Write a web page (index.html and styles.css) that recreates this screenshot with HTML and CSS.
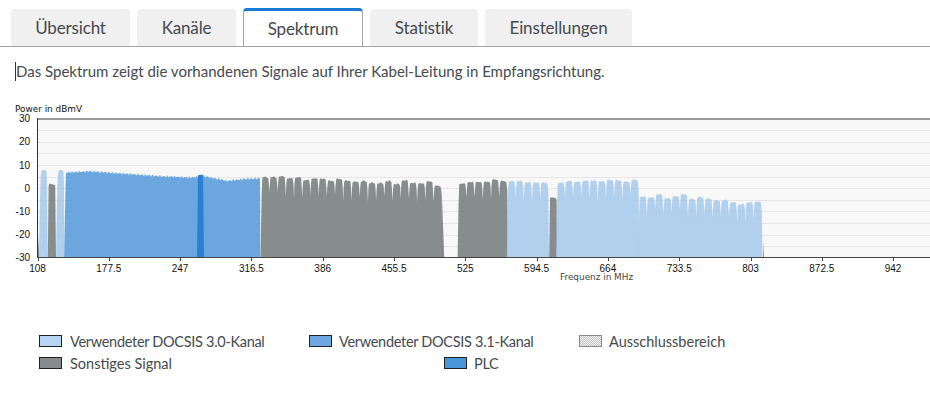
FILE: index.html
```html
<!DOCTYPE html>
<html lang="de">
<head>
    <meta charset="UTF-8">
    <meta name="viewport" content="width=device-width, initial-scale=1.0">
    <title>Spektrum</title>
    <link rel="stylesheet" href="styles.css">
</head>
<body>
    <div class="tabs">
        <a class="tab">Übersicht</a>
        <a class="tab">Kanäle</a>
        <a class="tab active">Spektrum</a>
        <a class="tab">Statistik</a>
        <a class="tab">Einstellungen</a>
    </div>

    <p class="intro">Das Spektrum zeigt die vorhandenen Signale auf Ihrer Kabel-Leitung in Empfangsrichtung.</p>

    <svg id="chart" class="chart" width="930" height="185" viewBox="0 0 930 185"></svg>

    <div class="legend">
        <div class="legend-row">
            <div class="legend-item col-a"><span class="swatch docsis30"></span>Verwendeter DOCSIS 3.0-Kanal</div>
            <div class="legend-item col-b"><span class="swatch docsis31"></span>Verwendeter DOCSIS 3.1-Kanal</div>
            <div class="legend-item wide"><span class="swatch excluded"></span>Ausschlussbereich</div>
        </div>
        <div class="legend-row">
            <div class="legend-item col-c wide"><span class="swatch other"></span>Sonstiges Signal</div>
            <div class="legend-item"><span class="swatch plc"></span>PLC</div>
        </div>
    </div>

    <script src="chart.js"></script>
</body>
</html>
```

FILE: styles.css
```css
body {
    font-family: 'Lato', sans-serif;
    margin: 0;
    background-color: #ffffff;
    color: #444a4f;
    overflow: hidden;
}

.tabs {
    display: flex;
    gap: 7px;
    height: 37px;
    margin-top: 9px;
    padding-left: 11px;
    border-bottom: 1px solid #a3a3a3;
}

.tab {
    display: flex;
    align-items: center;
    justify-content: center;
    background-color: #f0f0f0;
    border-radius: 4px 4px 0 0;
    font-size: 17px;
    letter-spacing: -0.15px;
}

.tab:nth-child(1) { width: 119px; }
.tab:nth-child(2) { width: 99px; }
.tab:nth-child(3) { width: 120px; }
.tab:nth-child(4) { width: 108px; }
.tab:nth-child(5) { width: 147px; }

.tab.active {
    background-color: #ffffff;
    border: 1px solid #a3a3a3;
    border-top: 3px solid #1a7bd4;
    border-bottom: none;
    height: 38px;
    box-sizing: border-box;
    margin-top: -1px;
}

.intro {
    margin: 15px 0 0 15px;
    height: 19px;
    line-height: 19px;
    font-size: 15px;
    border-left: 1px solid #333;
}

.chart {
    display: block;
    margin-top: 19px;
}

.chart text {
    font-family: 'Liberation Sans', sans-serif;
    font-size: 10px;
    fill: #111;
}

.chart .axis-title {
    font-family: 'DejaVu Sans', sans-serif;
    font-size: 8.9px;
}

.chart .axis-title.freq {
    fill: #444;
}

.legend {
    margin-top: 45px;
    padding-left: 39px;
    font-size: 14.5px;
    letter-spacing: -0.3px;
}

.legend-row {
    display: flex;
    height: 22px;
    align-items: center;
}

.legend-item {
    display: flex;
    align-items: center;
    gap: 7px;
}

.legend-item.wide {
    letter-spacing: 0;
}

.col-a { width: 270px; gap: 8px; }
.col-b { width: 270px; }
.col-c { width: 405px; gap: 8px; }

.swatch {
    width: 23px;
    height: 12px;
    box-sizing: border-box;
    border: 1px solid #222;
}

.docsis30 { background-color: #b7d4f0; }
.docsis31 { background-color: #6fa8e0; }
.other { background-color: #888b8d; }
.plc { background-color: #4a94da; }

.excluded {
    border-color: #8a8a8a;
    background: repeating-conic-gradient(#c4c4c4 0 25%, #f2f2f2 0 50%) 0 0 / 2px 2px;
}
```

FILE: chart.js
```js
var svg = document.getElementById('chart');
var NS = 'http://www.w3.org/2000/svg';

var LEFT = 37.5, TOP = 18.7, PX_DB = 2.317, PX_MHZ = 1.026;

function fx(mhz) { return LEFT + (mhz - 108) * PX_MHZ; }
function vy(db) { return TOP + (30 - db) * PX_DB; }

function add(tag, attrs, text) {
    var el = document.createElementNS(NS, tag);
    for (var k in attrs) el.setAttribute(k, attrs[k]);
    if (text !== undefined) el.textContent = text;
    svg.appendChild(el);
    return el;
}

// small repeatable jitter, the chart must look the same on every load
function jitter(i) {
    return Math.sin(i * 12.9898) * Math.cos(i * 4.1414);
}

var LIGHT = '#a9cbeb', BLUE = '#5b9dda', GRAY = '#7a7f81';

// background + grid
add('rect', { x: 37, y: 18, width: 893, height: 140, fill: '#f8f8f8' });
for (var db = -25; db < 30; db += 5) {
    add('rect', { x: 37, y: Math.round(vy(db)), width: 893, height: 1, fill: '#e6e6e6' });
}

// channels: one bump per 8 MHz, tops in dBmV
function group(start, tops, fill) {
    var pts = [[fx(start) - 0.6, vy(-30)]];
    tops.forEach(function (top, c) {
        var x0 = fx(start + c * 8);
        var w = 8 * PX_MHZ;
        var dip = top - 6.5 - Math.abs(jitter(c + start)) * 2.5;
        if (c === 0) {
            pts.push([x0 + 0.4, vy(top - 8)]);
        } else {
            pts.push([x0 - 0.5, vy(top - 3)]);
            pts.push([x0, vy(dip)]);
            pts.push([x0 + 0.5, vy(top - 3)]);
        }
        pts.push([x0 + 1.1, vy(top - 0.3)]);
        for (var i = 1; i < 5; i++) {
            pts.push([x0 + 1.1 + i * 1.2, vy(top + jitter(c * 7 + i + start) * 0.4)]);
        }
        pts.push([x0 + w - 1.1, vy(top - 0.4)]);
        if (c === tops.length - 1) pts.push([x0 + w - 0.1, vy(top - 4)]);
    });
    var last = fx(start + tops.length * 8);
    pts.push([last + 0.6, vy(-30)]);
    return area(pts, fill);
}

function area(pts, fill) {
    var d = pts.map(function (p) { return p[0].toFixed(1) + ',' + p[1].toFixed(1); }).join(' ');
    return add('polygon', { points: d, fill: fill, 'fill-opacity': 0.9 });
}

// rounded single channels below 134 MHz
function bump(x0, x1, top, fill) {
    area([[x0, vy(-30)], [x0 + 1, vy(-5)], [x0 + 1.7, vy(top - 3)], [x0 + 2.5, vy(top - 0.5)],
        [x0 + 3.5, vy(top)], [x1 - 2.2, vy(top)], [x1 - 1.2, vy(top - 1)], [x1 - 0.7, vy(top - 5)], [x1, vy(-30)]], fill);
}
area([[37.5, vy(-30)], [37.5, vy(-17)], [39.5, vy(-30)]], GRAY);
bump(39, 47.7, 7.9, LIGHT);
area([[47.8, vy(-30)], [48.6, vy(1)], [49.3, vy(2)], [53, vy(1.6)], [55.2, vy(1.3)], [56, vy(-30)]], GRAY);
bump(56, 64.6, 7.9, LIGHT);

// wide OFDM block
var blueTop = [[66, 6.8], [90, 7.3], [120, 6.4], [160, 5.2], [190, 4.6], [204, 5.2], [227, 3.2], [245, 4], [260, 4.2]];
function blueAt(x) {
    for (var i = 1; i < blueTop.length; i++) {
        if (x <= blueTop[i][0]) {
            var a = blueTop[i - 1], b = blueTop[i];
            return a[1] + (b[1] - a[1]) * (x - a[0]) / (b[0] - a[0]);
        }
    }
    return 4.2;
}
var bluePts = [[64.2, vy(-30)], [65.5, vy(0)]];
for (var x = 66; x <= 260; x += 1) {
    bluePts.push([x, vy(blueAt(x) + jitter(x) * 0.7)]);
}
bluePts.push([260.4, vy(-30)]);
area(bluePts, BLUE);

// PLC
var plcPts = [[197, vy(-30)], [198, vy(5.4)]];
for (var p = 198; p <= 203; p += 1) plcPts.push([p, vy(blueAt(p) + 0.7 + jitter(p) * 0.3)]);
plcPts.push([204, vy(-30)]);
add('polygon', { points: plcPts.map(function (q) { return q.join(','); }).join(' '), fill: '#2a7fd1' });

group(326, [4.85, 4.85, 5.13, 4.27, 4.7, 3.55, 4.27, 4.13, 3.26, 3.98, 3.26, 2.83, 3.12, 2.4, 2.26, 3.12, 1.82, 3.4, 2.26, 2.1, 3, 1.1], GRAY);
area([[441.6, vy(1)], [444.2, vy(-30)], [441.6, vy(-30)]], GRAY);
group(518, [2, 2.7, 2.7, 2.8, 3.7, 3.1], GRAY);
group(566, [3.1, 3.1, 2.5, 2.4, 2.4], LIGHT);
area([[549.2, vy(-30)], [550, vy(-4.4)], [551, vy(-3.9)], [555.5, vy(-4.2)], [556.6, vy(-5)], [557.2, vy(-30)]], GRAY);
group(614, [2.4, 3.1, 2.83, 3.26, 3.4, 3, 3.55, 3.4, 2.83, 3.7], LIGHT);
group(694, [-3.64, -3.93, -2.64, -4.36, -3.5, -2.64, -4.65, -3.79, -4.36, -5.2, -5.08, -6.09, -6.95, -6.09, -5.8], LIGHT);
area([[763, vy(-30)], [763.4, vy(-23)], [764, vy(-30)]], GRAY);

// axes
add('rect', { x: 37, y: 18, width: 893, height: 2, fill: '#999' });
add('rect', { x: 37, y: 18, width: 1, height: 140, fill: '#333' });
add('rect', { x: 37, y: 157, width: 893, height: 1, fill: '#444' });

for (var v = -30; v <= 30; v += 10) {
    add('text', { x: 30, y: vy(v) + 3.5, 'text-anchor': 'end' }, v);
}

['108', '177.5', '247', '316.5', '386', '455.5', '525', '594.5', '664', '733.5', '803', '872.5', '942'].forEach(function (label, i) {
    var x = LEFT + i * 71.3;
    add('rect', { x: Math.round(x), y: 158, width: 1, height: 3, fill: '#444' });
    add('text', { x: x, y: 172, 'text-anchor': 'middle' }, label);
});

add('text', { x: 15, y: 12, 'class': 'axis-title' }, 'Power in dBmV');
add('text', { x: 560, y: 180, 'class': 'axis-title freq' }, 'Frequenz in MHz');
```
